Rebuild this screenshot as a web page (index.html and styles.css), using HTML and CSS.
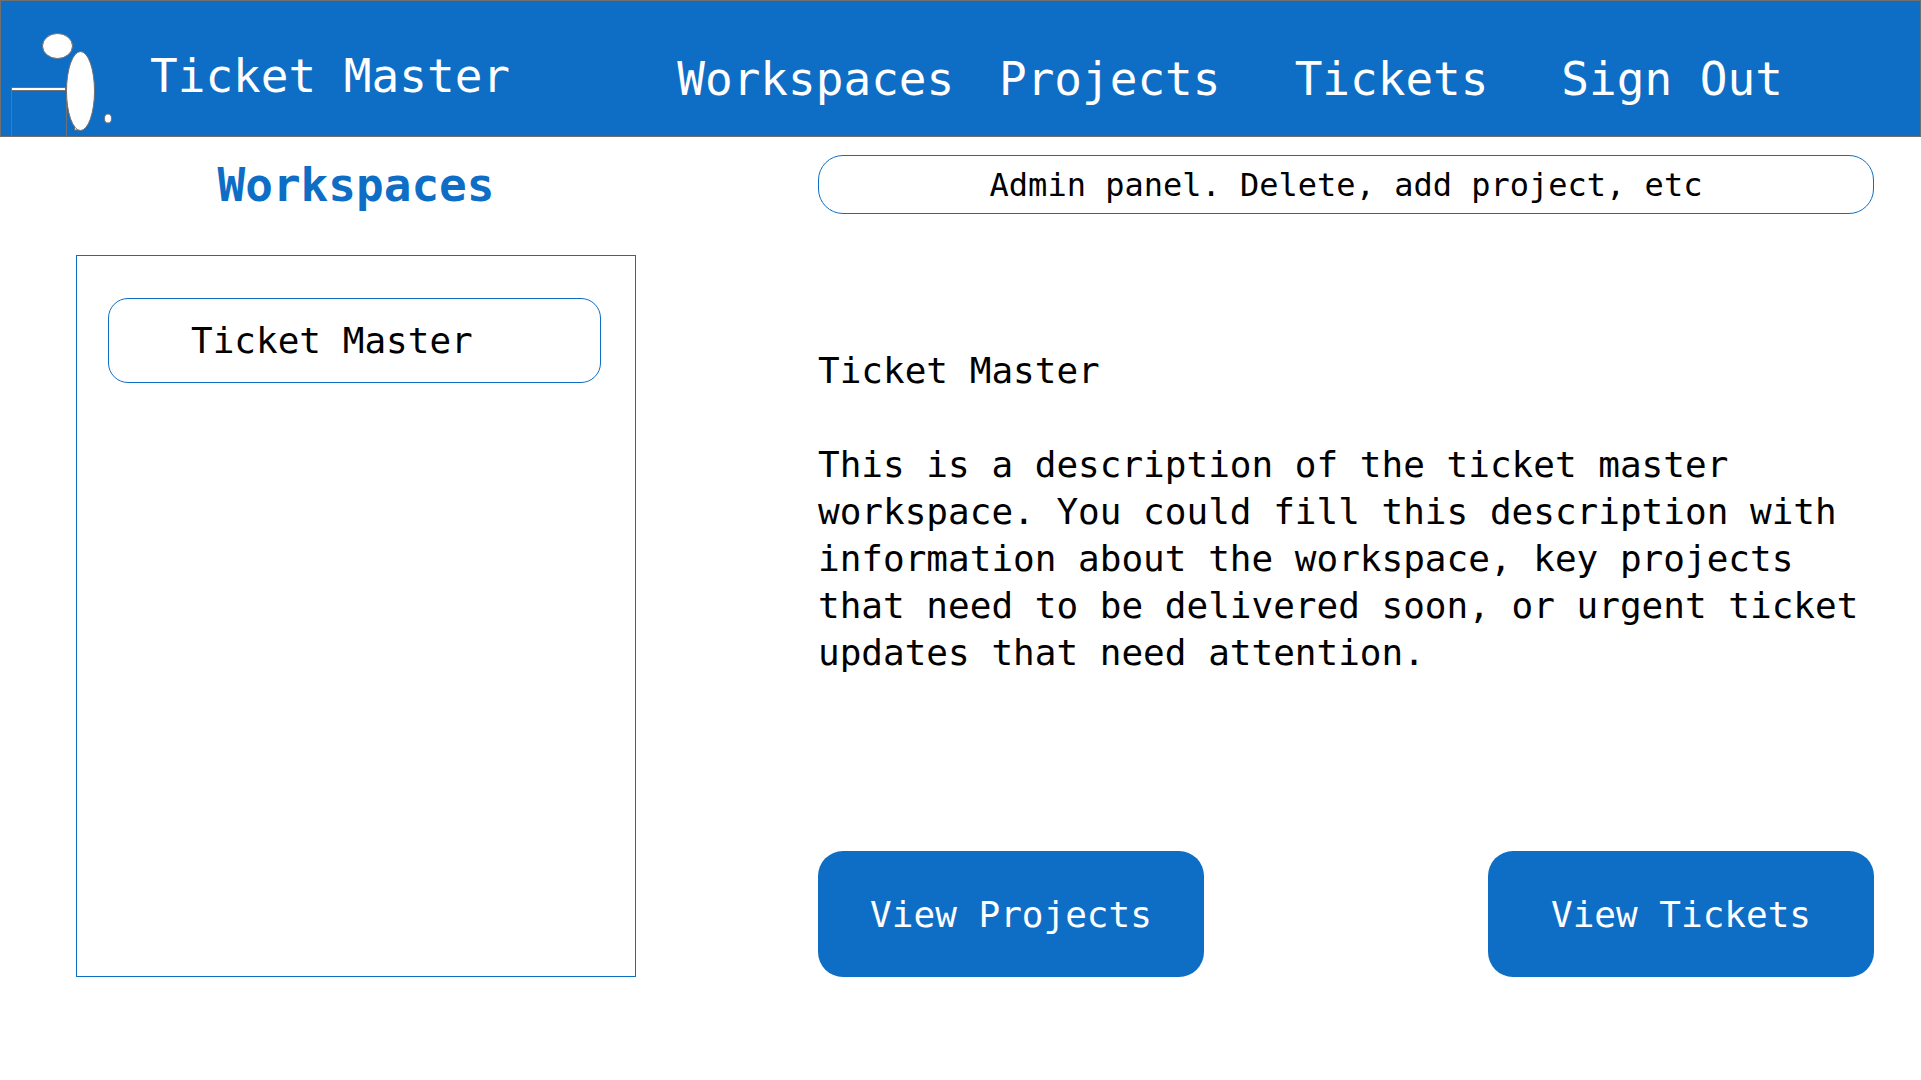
FILE: index.html
```html
<!DOCTYPE html>
<html lang="en">
<head>
<meta charset="utf-8">
<meta name="viewport" content="width=device-width, initial-scale=1">
<title>Ticket Master</title>
<link rel="stylesheet" href="styles.css">
</head>
<body>
<header class="topbar">
  <div class="brand">
    <svg class="logo" viewBox="0 0 124 135" width="124" height="135" aria-hidden="true">
      <g fill="#fff" stroke="#707070">
        <path d="M10.500 135V86.500H65.500V135" fill="none"/>
        <rect x="10.500" y="86.500" width="54" height="3"/>
        <ellipse cx="56.500" cy="45" rx="15" ry="12.500"/>
        <rect x="73.500" y="124" width="5" height="5"/>
        <ellipse cx="79.500" cy="90" rx="14" ry="39.500"/>
        <ellipse cx="107" cy="117.500" rx="3.500" ry="4.500"/>
      </g>
    </svg>
    <span class="brand-name">Ticket Master</span>
  </div>
  <nav class="nav">
    <a href="#workspaces">Workspaces</a>
    <a href="#projects">Projects</a>
    <a href="#tickets">Tickets</a>
    <a href="#sign-out">Sign Out</a>
  </nav>
</header>
<main class="layout">
  <section class="sidebar">
    <h1 class="title">Workspaces</h1>
    <div class="panel">
      <button class="item" type="button">Ticket Master</button>
    </div>
  </section>
  <section class="detail">
    <div class="admin">Admin panel. Delete, add project, etc</div>
    <article class="description">
      <h2 class="name">Ticket Master</h2>
      <p class="text">This is a description of the ticket master workspace. You could fill this description with information about the workspace, key projects that need to be delivered soon, or urgent ticket updates that need attention.</p>
    </article>
    <div class="actions">
      <button class="action" type="button">View Projects</button>
      <button class="action" type="button">View Tickets</button>
    </div>
  </section>
</main>
</body>
</html>
```
FILE: styles.css
```css
:root {
  --blue: #0e6ec6;
  --grey: #707070;
}

* {
  box-sizing: border-box;
}

body {
  margin: 0;
  background: #fff;
  color: #000;
  font: 36px/47px Consolas, "DejaVu Sans Mono", monospace;
}

button {
  font: inherit;
  cursor: pointer;
}

.topbar {
  display: grid;
  grid-template-columns: 677fr 1244fr;
  background: var(--blue);
  border: 1px solid var(--grey);
  color: #fff;
  font-size: 46px;
  line-height: 54px;
}

.brand {
  display: flex;
  gap: 25px;
  white-space: nowrap;
}

.logo {
  display: block;
}

.brand-name {
  padding-top: 48px;
}

.nav {
  display: grid;
  grid-template-columns: 322fr 296fr 267fr 359fr;
  padding-top: 51px;
  white-space: nowrap;
}

.nav a {
  color: inherit;
  text-decoration: none;
}

.layout {
  display: grid;
  grid-template-columns: 560fr 1056fr;
  column-gap: 182px;
  padding: 18px 47px 48px 76px;
}

.sidebar {
  display: flex;
  flex-direction: column;
}

.title {
  margin: 3px 0 43px;
  color: var(--blue);
  font-size: 46px;
  line-height: 54px;
  text-align: center;
}

.panel {
  flex: 1;
  padding: 42px 34px 42px 31px;
  border: 1px solid var(--blue);
}

.item {
  width: 100%;
  height: 85px;
  padding: 0 82px;
  background: #fff;
  border: 1px solid var(--blue);
  border-radius: 20px;
  color: #000;
  text-align: left;
}

.admin {
  padding: 6px 24px 4px;
  border: 1px solid var(--blue);
  border-radius: 25px;
  font-size: 32px;
  text-align: center;
}

.description {
  margin: 133px 0 175px;
}

.name {
  margin: 0 0 47px;
  font-size: 36px;
  font-weight: 400;
}

.text {
  margin: 0;
}

.actions {
  display: flex;
  justify-content: space-between;
  gap: 48px;
}

.action {
  width: 386px;
  height: 126px;
  background: var(--blue);
  border: 0;
  border-radius: 25px;
  color: #fff;
}
```
